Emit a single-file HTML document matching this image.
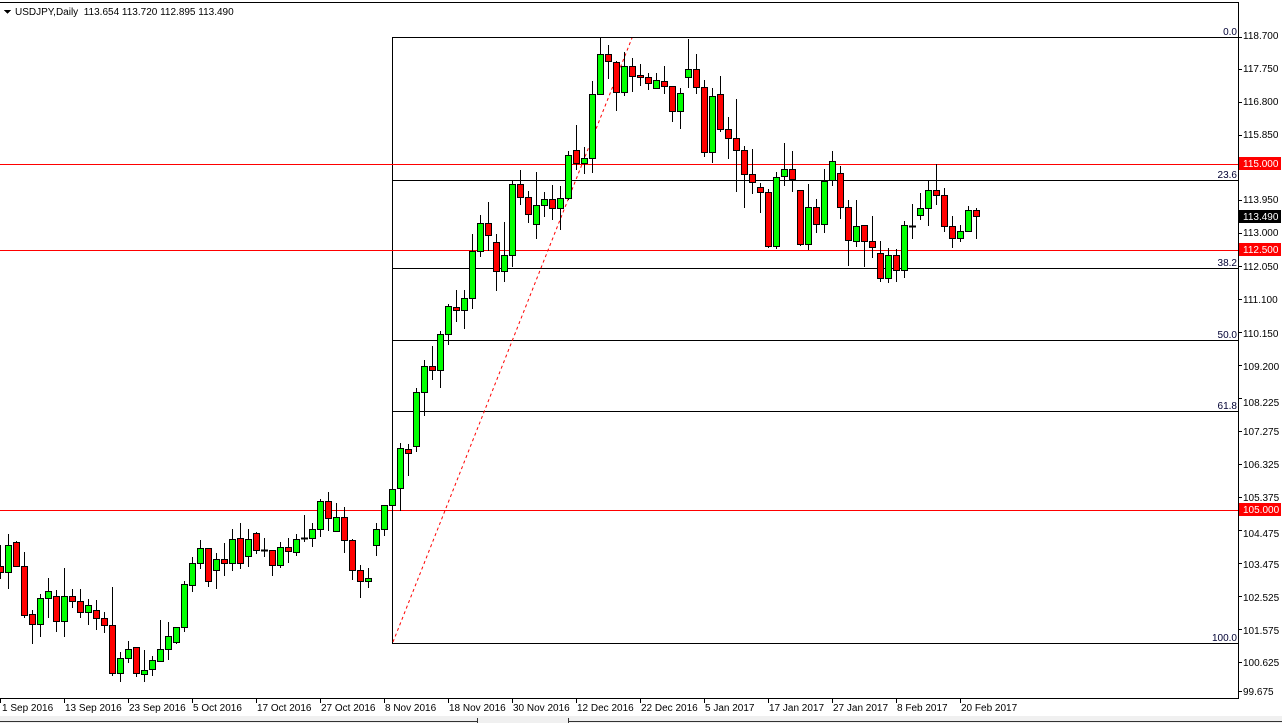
<!DOCTYPE html>
<html><head><meta charset="utf-8"><style>
html,body{margin:0;padding:0;background:#fff;width:1282px;height:723px;overflow:hidden}
svg{display:block}
text{font-family:"Liberation Sans",sans-serif;font-size:10px}
</style></head><body>
<svg id="s" width="1282" height="723" xmlns="http://www.w3.org/2000/svg" shape-rendering="crispEdges">
<rect x="0" y="0" width="1282" height="723" fill="#fff"/>
<line x1="0" y1="2.5" x2="1238" y2="2.5" stroke="#000"/>
<line x1="1238.5" y1="2" x2="1238.5" y2="699" stroke="#000"/>
<line x1="0" y1="698.5" x2="1239" y2="698.5" stroke="#000"/>
<rect x="0" y="716" width="1282" height="7" fill="#f0f0f0"/>
<line x1="0" y1="721.5" x2="477" y2="721.5" stroke="#333"/>
<line x1="568" y1="721.5" x2="1282" y2="721.5" stroke="#333"/>
<line x1="477.5" y1="718" x2="477.5" y2="723" stroke="#333"/>
<line x1="568.5" y1="718" x2="568.5" y2="723" stroke="#333"/>
<polygon points="4,10 11,10 7.5,14" fill="#000"/>
<text x="15" y="15" fill="#000">USDJPY,Daily&#160; 113.654 113.720 112.895 113.490</text>
<g stroke="#000">
<line x1="392" y1="37.5" x2="1238" y2="37.5"/>
<line x1="392" y1="180.5" x2="1238" y2="180.5"/>
<line x1="392" y1="268.5" x2="1238" y2="268.5"/>
<line x1="392" y1="340.5" x2="1238" y2="340.5"/>
<line x1="392" y1="411.5" x2="1238" y2="411.5"/>
<line x1="392" y1="643.5" x2="1238" y2="643.5"/>
<line x1="392.5" y1="37" x2="392.5" y2="644"/>
</g>
<g fill="#000033" text-anchor="end">
<text x="1237" y="35">0.0</text>
<text x="1237" y="178">23.6</text>
<text x="1237" y="266">38.2</text>
<text x="1237" y="338">50.0</text>
<text x="1237" y="409">61.8</text>
<text x="1237" y="641">100.0</text>
</g>
<g stroke="#ff0000">
<line x1="0" y1="164.5" x2="1238" y2="164.5"/>
<line x1="0" y1="250.5" x2="1238" y2="250.5"/>
<line x1="0" y1="510.5" x2="1238" y2="510.5"/>
</g>
<line x1="393" y1="642" x2="632" y2="38" stroke="#ff0000" stroke-dasharray="3 3" shape-rendering="auto"/>
<g id="c"></g>
<g fill="#000">
<text x="1243" y="39">118.700</text>
<text x="1243" y="72">117.750</text>
<text x="1243" y="105">116.800</text>
<text x="1243" y="138">115.850</text>
<text x="1243" y="203">113.950</text>
<text x="1243" y="236">113.000</text>
<text x="1243" y="270">112.050</text>
<text x="1243" y="303">111.100</text>
<text x="1243" y="337">110.150</text>
<text x="1243" y="370">109.200</text>
<text x="1243" y="406">108.225</text>
<text x="1243" y="435">107.275</text>
<text x="1243" y="468">106.325</text>
<text x="1243" y="501">105.375</text>
<text x="1243" y="537">104.475</text>
<text x="1243" y="568">103.475</text>
<text x="1243" y="601">102.525</text>
<text x="1243" y="634">101.575</text>
<text x="1243" y="666">100.625</text>
<text x="1243" y="695">99.675</text>
</g>
<g stroke="#000">
<line x1="1239" y1="37.5" x2="1242" y2="37.5"/><line x1="1239" y1="69.5" x2="1242" y2="69.5"/><line x1="1239" y1="102.5" x2="1242" y2="102.5"/><line x1="1239" y1="135.5" x2="1242" y2="135.5"/><line x1="1239" y1="200.5" x2="1242" y2="200.5"/><line x1="1239" y1="233.5" x2="1242" y2="233.5"/><line x1="1239" y1="266.5" x2="1242" y2="266.5"/><line x1="1239" y1="299.5" x2="1242" y2="299.5"/><line x1="1239" y1="332.5" x2="1242" y2="332.5"/><line x1="1239" y1="365.5" x2="1242" y2="365.5"/><line x1="1239" y1="398.5" x2="1242" y2="398.5"/><line x1="1239" y1="431.5" x2="1242" y2="431.5"/><line x1="1239" y1="464.5" x2="1242" y2="464.5"/><line x1="1239" y1="497.5" x2="1242" y2="497.5"/><line x1="1239" y1="530.5" x2="1242" y2="530.5"/><line x1="1239" y1="563.5" x2="1242" y2="563.5"/><line x1="1239" y1="596.5" x2="1242" y2="596.5"/><line x1="1239" y1="629.5" x2="1242" y2="629.5"/><line x1="1239" y1="662.5" x2="1242" y2="662.5"/><line x1="1239" y1="691.5" x2="1242" y2="691.5"/>
</g>
<rect x="1239" y="157" width="42" height="13" fill="#ff0000"/>
<text x="1243" y="167" fill="#fff">115.000</text>
<rect x="1239" y="210" width="42" height="13" fill="#000"/>
<text x="1243" y="220" fill="#fff">113.490</text>
<rect x="1239" y="243" width="42" height="13" fill="#ff0000"/>
<text x="1243" y="253" fill="#fff">112.500</text>
<rect x="1239" y="503" width="42" height="13" fill="#ff0000"/>
<text x="1243" y="513" fill="#fff">105.000</text>
<g fill="#000">
<text x="2" y="711">1 Sep 2016</text>
<text x="65" y="711">13 Sep 2016</text>
<text x="129" y="711">23 Sep 2016</text>
<text x="193" y="711">5 Oct 2016</text>
<text x="257" y="711">17 Oct 2016</text>
<text x="321" y="711">27 Oct 2016</text>
<text x="385" y="711">8 Nov 2016</text>
<text x="449" y="711">18 Nov 2016</text>
<text x="513" y="711">30 Nov 2016</text>
<text x="577" y="711">12 Dec 2016</text>
<text x="641" y="711">22 Dec 2016</text>
<text x="705" y="711">5 Jan 2017</text>
<text x="769" y="711">17 Jan 2017</text>
<text x="833" y="711">27 Jan 2017</text>
<text x="897" y="711">8 Feb 2017</text>
<text x="961" y="711">20 Feb 2017</text>
</g>
<g stroke="#000">
<line x1="0.5" y1="699" x2="0.5" y2="703"/><line x1="64.5" y1="699" x2="64.5" y2="703"/><line x1="128.5" y1="699" x2="128.5" y2="703"/><line x1="192.5" y1="699" x2="192.5" y2="703"/><line x1="256.5" y1="699" x2="256.5" y2="703"/><line x1="320.5" y1="699" x2="320.5" y2="703"/><line x1="384.5" y1="699" x2="384.5" y2="703"/><line x1="448.5" y1="699" x2="448.5" y2="703"/><line x1="512.5" y1="699" x2="512.5" y2="703"/><line x1="576.5" y1="699" x2="576.5" y2="703"/><line x1="640.5" y1="699" x2="640.5" y2="703"/><line x1="704.5" y1="699" x2="704.5" y2="703"/><line x1="768.5" y1="699" x2="768.5" y2="703"/><line x1="832.5" y1="699" x2="832.5" y2="703"/><line x1="896.5" y1="699" x2="896.5" y2="703"/><line x1="960.5" y1="699" x2="960.5" y2="703"/>
</g>
</svg>
<script>
var D=[
[0,'r',566,572,545,578],[8,'g',545,572,534,588],[16,'r',542,566,541,566],[24,'r',566,615,552,617],[32,'r',614,624,610,643],[40,'g',598,624,594,636],[48,'g',591,598,578,617],[56,'r',596,621,590,631],[64,'g',596,621,568,636],[72,'r',596,601,589,607],[80,'r',601,612,589,617],[88,'g',605,612,599,624],[96,'r',610,618,600,629],[104,'r',618,625,612,632],[112,'r',625,673,587,675],[120,'g',658,673,652,681],[128,'g',649,658,641,662],[136,'r',647,673,647,676],[144,'g',670,674,650,681],[152,'g',660,669,656,675],[160,'g',649,661,620,661],[168,'g',636,649,622,659],[176,'g',627,642,627,643],[184,'g',584,627,581,631],[192,'g',563,585,557,591],[200,'g',548,563,540,568],[208,'r',548,581,548,586],[216,'g',559,570,553,588],[224,'r',559,563,543,575],[232,'g',539,563,529,570],[240,'r',538,563,523,568],[248,'g',539,556,529,566],[256,'r',533,550,532,553],[264,'d',550,550,538,556],[272,'r',550,565,550,575],[280,'g',547,565,542,567],[288,'r',547,551,538,562],[296,'g',539,552,534,555],[304,'d',538,539,515,541],[312,'g',529,538,523,546],[320,'g',501,529,499,536],[328,'r',501,518,492,530],[336,'g',517,531,503,531],[344,'r',517,540,507,552],[352,'r',540,570,539,579],[360,'r',570,581,565,597],[368,'g',578,581,568,587],[376,'g',529,545,523,555],[384,'g',505,529,505,535],
[392,'g',489,505,480,510],[400,'g',448,488,443,510],[408,'r',449,453,444,475],[416,'g',392,446,388,451],[424,'g',366,392,360,415],[432,'r',366,370,346,379],[440,'g',334,370,331,387],[448,'g',306,334,304,344],[456,'r',307,310,290,321],[464,'g',298,310,290,328],[472,'g',251,298,234,308],[480,'g',223,251,215,256],[488,'r',223,235,202,250],[496,'r',242,271,234,290],[504,'g',255,271,222,281],[512,'g',184,255,180,266],[520,'r',184,197,170,204],[528,'r',197,214,191,222],[536,'g',205,224,172,238],[544,'g',199,205,192,216],[552,'r',199,208,185,219],[560,'g',198,208,186,229],[568,'g',155,198,151,199],[576,'r',150,163,125,169],[584,'g',158,163,147,173],[592,'g',94,158,81,172],[600,'g',54,94,37,94],[608,'r',54,61,45,78],[616,'r',62,92,61,110],[624,'g',66,92,52,95],[632,'r',66,76,58,91],[640,'r',75,77,64,85],[648,'r',77,83,73,89],[656,'g',80,88,73,88],[664,'r',81,86,66,93],[672,'r',86,111,86,121],[680,'g',93,111,88,128],[688,'g',69,77,39,87],[696,'r',69,87,54,93],[704,'r',87,152,80,156],[712,'g',96,152,88,162],
[720,'r',94,129,76,131],[728,'r',129,138,117,158],[736,'r',138,150,99,191],[744,'r',150,174,146,207],[752,'r',174,182,149,193],[760,'r',187,192,183,212],[768,'r',192,246,189,247],[776,'g',177,246,172,248],[784,'g',169,176,143,185],[792,'r',169,179,151,191],[800,'r',190,244,190,245],[808,'g',207,244,184,249],[816,'r',207,224,199,232],[824,'g',181,224,169,232],[832,'g',161,180,151,185],[840,'r',173,207,166,218],[848,'r',207,240,200,265],[856,'g',226,241,200,246],[864,'r',225,241,225,266],[872,'r',241,247,216,257],[880,'r',253,278,241,281],[888,'g',255,278,248,282],[896,'r',255,270,249,281],[904,'g',225,270,221,277],[912,'d',226,226,204,238],[920,'g',208,215,193,219],[928,'g',190,208,180,225],[936,'r',190,195,164,204],[944,'r',195,226,188,231],[952,'r',226,238,216,247],[960,'g',231,238,225,241],[968,'g',210,231,206,231],[976,'r',210,216,208,238]];
var g=document.getElementById('c'),h='';
D.forEach(function(d){var x=d[0];
h+='<line x1="'+(x+0.5)+'" y1="'+d[4]+'" x2="'+(x+0.5)+'" y2="'+(d[5]+1)+'" stroke="#000"/>';
if(d[1]=='d'){h+='<line x1="'+(x-3)+'" y1="'+(d[2]+0.5)+'" x2="'+(x+4)+'" y2="'+(d[2]+0.5)+'" stroke="#000" stroke-width="2"/>';}
else{h+='<rect x="'+(x-2.5)+'" y="'+(d[2]+0.5)+'" width="6" height="'+Math.max(2,d[3]-d[2])+'" fill="'+(d[1]=='g'?'#00ff00':'#ff0000')+'" stroke="#000"/>';}
});
g.innerHTML=h;
</script>
</body></html>
